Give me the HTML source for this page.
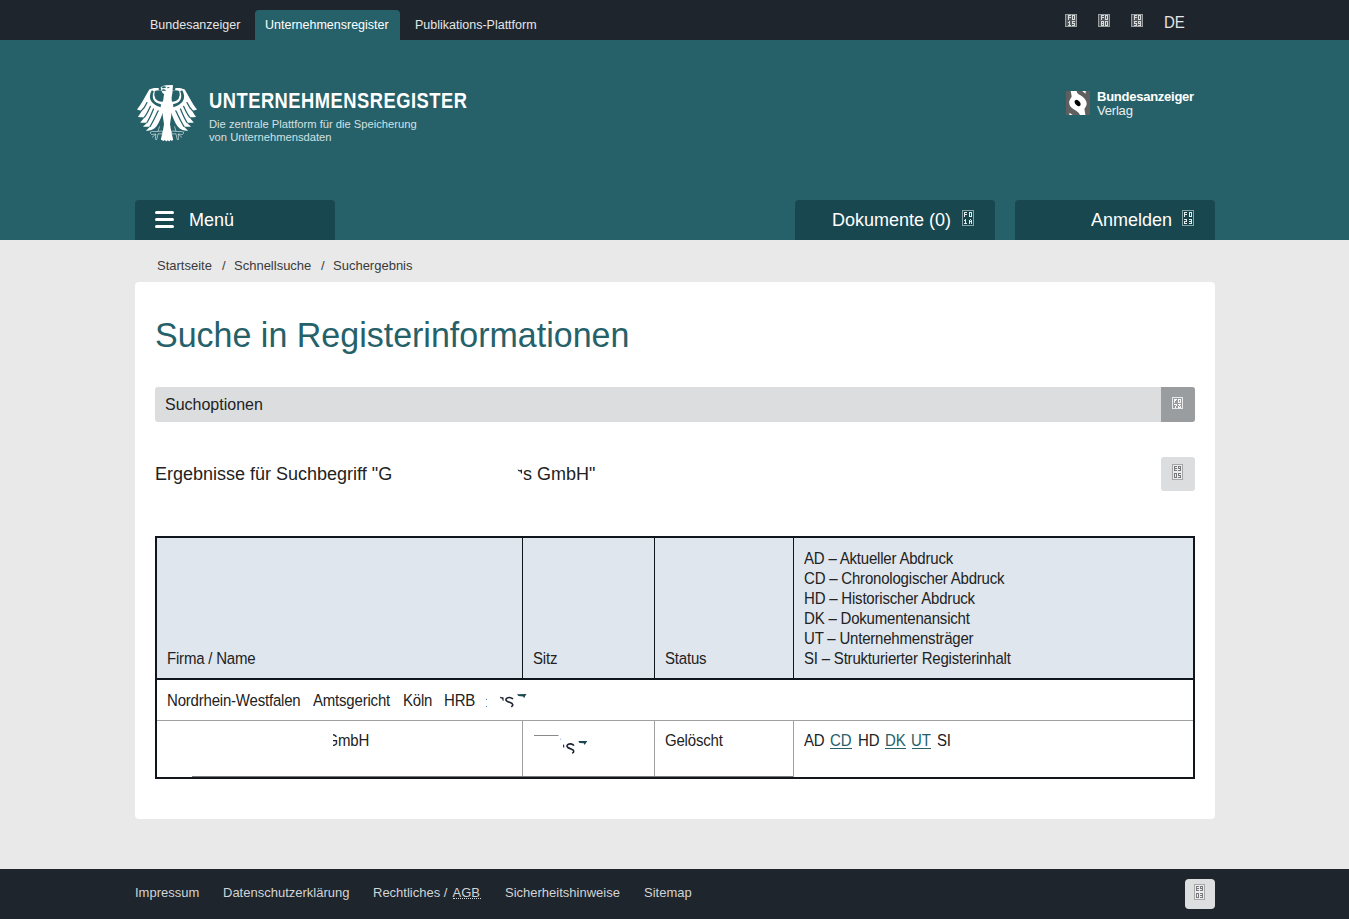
<!DOCTYPE html>
<html lang="de"><head><meta charset="utf-8">
<style>
*{box-sizing:border-box;margin:0;padding:0}
html,body{width:1349px;height:919px;overflow:hidden}
body{font-family:"Liberation Sans",sans-serif;background:#e9e9e9;color:#222;position:relative}
.a{position:absolute;white-space:nowrap;line-height:1}
.sy{transform:scaleY(1.05);transform-origin:0 16%}
#topbar{left:0;top:0;width:1349px;height:40px;background:#1e252d}
.tab{font-size:12.5px;color:#e6e6e6}
.act{left:255px;top:10px;width:145px;height:30px;background:#26616a;border-radius:4px 4px 0 0}
#header{left:0;top:40px;width:1349px;height:200px;background:#26616a}
.btn{position:absolute;top:200px;height:40px;background:#19474f;border-radius:4px 4px 0 0}
.bt{color:#fff;font-size:18px}
.tofu{position:absolute;border:1px solid #9a9a9a;background:#5b6066}
.tofu i{position:absolute;left:1px;right:1px;height:4px;background:repeating-linear-gradient(90deg,#ddd 0 1px,transparent 1px 2px)}
#card{left:135px;top:282px;width:1080px;height:537px;background:#fff;border-radius:4px}
#footer{left:0;top:869px;width:1349px;height:50px;background:#1e252d}
.ft{font-size:13px;color:#d2d4d6}

.tbl{font-size:15px;color:#222;letter-spacing:-0.2px;transform:scaleY(1.07);transform-origin:0 2.5px}
.tbl.lk{color:#26616a}
</style></head><body>
<div id="topbar" class="a"></div>
<div class="a act"></div>
<div class="a tab sy" style="left:150px;top:19px">Bundesanzeiger</div>
<div class="a tab sy" style="left:265px;top:19px;color:#fff">Unternehmensregister</div>
<div class="a tab sy" style="left:415px;top:19px">Publikations-Plattform</div>
<div class="a sy" style="left:1164px;top:14px;font-size:15px;color:#e6e6e6">DE</div>

<div id="header" class="a"></div>
<svg class="a" style="left:137px;top:85px" width="60" height="57" viewBox="0 0 60 57">
 <g>
  <path fill="#fff" d="M21.8 3.2 C19 2.5 14.5 3 12.3 4.6 C8 12 4 20 0 24.4 C1.8 25.2 3.5 25.4 5 25.4 C3.5 28 2.4 30.3 0.9 31.7 C3.2 32.4 5.8 32.5 7.8 32 C6.2 34 4.6 36 3.2 37.4 C5.5 37.9 8.3 37.9 10.4 37.4 C8.8 39 7.4 40.4 5.9 41.5 C8.3 41.9 11 41.8 13.5 41.2 C12 42.8 10.4 44.4 8.9 45.7 C12.5 46 16.5 45 19.3 41.5 C22 38 24.5 32 25.6 27.8 L30 28 L30 14 L27 6 L21.8 5 Z"/>
  <path fill="#26616a" d="M14.8 5.3 Q11.2 11.5 14.3 16.3 Q17.5 21 23.9 22.2 L23.9 19.2 Q18.8 18.3 16.7 15 Q14.8 11.5 16.8 6.3 Z"/>
  <path fill="#26616a" d="M17.8 6 Q22 4.6 27.5 6.2 L27.5 16.5 Q21.5 17.5 18.4 13.8 Q16.4 10 17.8 6 Z"/>
  <g stroke="#26616a" stroke-width="1.25" fill="none" stroke-linecap="round">
   <path d="M10 17.6 C8.5 21 6.5 24 4.6 25.5"/>
   <path d="M13.3 21.4 C11.5 25.5 9.5 29.5 7.4 32.1"/>
   <path d="M16.5 24 C14.5 29 12.5 33.5 10 37.5"/>
   <path d="M21.1 25.9 C18.5 31.5 16 37 13.1 41.3"/>
  </g>
  <g stroke="#fff" stroke-width="0.65" fill="none" opacity="0.85">
   <path d="M13.5 47 Q14 46.2 19 46.5 L25.5 46 Q26 48 25 49 L21 48.8 L19.8 54.5 L18.3 54.3 L18.8 49 L14.5 49.5 Q13 48.5 13.5 47 Z"/>
   <path d="M22.5 41.3 L21 46.5 M15 52.5 L18.8 49"/>
  </g>
 </g>
 <g transform="matrix(-1 0 0 1 60 0)">
  <path fill="#fff" d="M21.8 3.2 C19 2.5 14.5 3 12.3 4.6 C8 12 4 20 0 24.4 C1.8 25.2 3.5 25.4 5 25.4 C3.5 28 2.4 30.3 0.9 31.7 C3.2 32.4 5.8 32.5 7.8 32 C6.2 34 4.6 36 3.2 37.4 C5.5 37.9 8.3 37.9 10.4 37.4 C8.8 39 7.4 40.4 5.9 41.5 C8.3 41.9 11 41.8 13.5 41.2 C12 42.8 10.4 44.4 8.9 45.7 C12.5 46 16.5 45 19.3 41.5 C22 38 24.5 32 25.6 27.8 L30 28 L30 14 L27 6 L21.8 5 Z"/>
  <path fill="#26616a" d="M14.8 5.3 Q11.2 11.5 14.3 16.3 Q17.5 21 23.9 22.2 L23.9 19.2 Q18.8 18.3 16.7 15 Q14.8 11.5 16.8 6.3 Z"/>
  <path fill="#26616a" d="M17.8 6 Q22 4.6 27.5 6.2 L27.5 16.5 Q21.5 17.5 18.4 13.8 Q16.4 10 17.8 6 Z"/>
  <g stroke="#26616a" stroke-width="1.25" fill="none" stroke-linecap="round">
   <path d="M10 17.6 C8.5 21 6.5 24 4.6 25.5"/>
   <path d="M13.3 21.4 C11.5 25.5 9.5 29.5 7.4 32.1"/>
   <path d="M16.5 24 C14.5 29 12.5 33.5 10 37.5"/>
   <path d="M21.1 25.9 C18.5 31.5 16 37 13.1 41.3"/>
  </g>
  <g stroke="#fff" stroke-width="0.65" fill="none" opacity="0.85">
   <path d="M13.5 47 Q14 46.2 19 46.5 L25.5 46 Q26 48 25 49 L21 48.8 L19.8 54.5 L18.3 54.3 L18.8 49 L14.5 49.5 Q13 48.5 13.5 47 Z"/>
   <path d="M22.5 41.3 L21 46.5 M15 52.5 L18.8 49"/>
  </g>
 </g>
 <path fill="#fff" d="M27.7 9 L32.3 9 L34.5 10.6 L34.8 16 L36.3 21 L34.6 28 L33 39.3 Q34 47 36.2 54.6 L35 56 L33.5 55 L32.2 56.5 L30.8 55.2 L29.2 56.5 L27.8 55 L26.4 56 L23.8 54.6 Q26 47 27 39.3 L25.4 28 L23.7 21 L26.2 15.5 L26.8 10.4 Z"/>
 <path fill="#fff" d="M23.6 2.6 Q25 0.4 28.7 0.2 L35.9 0 L35.5 7.5 L34.6 12 L27.9 10.2 L25.2 7.3 Q24 5 23.6 2.6 Z"/>
 <path fill="#26616a" d="M24.5 1.9 Q27 0.7 29.5 2.1 Q28 3.4 26 3.3 Q24.9 2.9 24.5 1.9 Z"/>
 <path fill="#26616a" d="M25 4.5 Q27 3.9 28.8 4.9 L28.4 6 Q26.6 5.4 25.3 6.1 Z"/>
 <path fill="#26616a" d="M30.2 1.9 L33.1 2.3 L30.7 3.6 Z"/>
</svg>
<div class="a" style="left:209px;top:90px;font-size:22px;font-weight:700;color:#fff;letter-spacing:0.6px;transform:scaleX(0.833);transform-origin:0 0">UNTERNEHMENSREGISTER</div>
<div class="a" style="left:209px;top:118px;font-size:11.2px;color:#d3e0e2;line-height:13px">Die zentrale Plattform für die Speicherung<br>von Unternehmensdaten</div>

<svg class="a" style="left:1066px;top:91px" width="24" height="24" viewBox="0 0 24 24">
 <rect width="24" height="24" fill="#5f5f5f"/>
 <path fill="#fff" d="M4.7 0 L10.6 0 C11 2 12 3 14 4 C17 5.5 20.7 9 20.7 12.6 C20.7 15 19 17 18.4 18.1 C18.6 20 19.2 22 19.4 24 L13.9 24 C13 21.5 11 20 8 18.5 C5 17 3.1 14.5 3.1 11.6 C3.1 9 5 7 5.7 5.4 C5.4 3.5 4.9 1.5 4.7 0 Z M16.2 0 L19.8 0 L19.5 2.8 Z M3.4 21.7 L6.7 24 L3.4 24 Z"/>
 <ellipse cx="11.6" cy="12" rx="3.6" ry="2.3" transform="rotate(50 11.6 12)" fill="#000"/>
</svg>
<div class="a" style="left:1097px;top:90px;font-size:13px;font-weight:700;color:#fff;letter-spacing:-0.25px">Bundesanzeiger</div>
<div class="a" style="left:1097px;top:104px;font-size:13px;color:#e8eeef;letter-spacing:-0.2px">Verlag</div>

<div class="btn" style="left:135px;width:200px">
  <div class="a" style="left:20px;top:11px;width:19px;height:3px;background:#fff;border-radius:2px"></div>
  <div class="a" style="left:20px;top:18px;width:19px;height:3px;background:#fff;border-radius:2px"></div>
  <div class="a" style="left:20px;top:25px;width:19px;height:3px;background:#fff;border-radius:2px"></div>
  <span class="a bt sy" style="left:54px;top:10px">Menü</span>
</div>
<div class="btn" style="left:795px;width:200px"><span class="a bt sy" style="left:37px;top:10px">Dokumente (0)</span></div>
<div class="btn" style="left:1015px;width:200px"><span class="a bt sy" style="left:76px;top:10px">Anmelden</span></div>

<div class="a sy" style="left:157px;top:259px;font-size:13px;color:#3a3a3a">Startseite</div>
<div class="a sy" style="left:222px;top:259px;font-size:13px;color:#3a3a3a">/</div>
<div class="a sy" style="left:234px;top:259px;font-size:13px;color:#3a3a3a">Schnellsuche</div>
<div class="a sy" style="left:321px;top:259px;font-size:13px;color:#3a3a3a">/</div>
<div class="a sy" style="left:333px;top:259px;font-size:13px;color:#3a3a3a">Suchergebnis</div>

<div id="card" class="a"></div>
<div class="a" style="left:155px;top:318px;font-size:34px;color:#26616a;transform:scaleY(1.05);transform-origin:0 85%">Suche in Registerinformationen</div>

<div class="a" style="left:155px;top:387px;width:1040px;height:35px;background:#dcdddf;border-radius:3px"></div>
<div class="a" style="left:1161px;top:387px;width:34px;height:35px;background:#9a9da0;border-radius:0 3px 3px 0"></div>
<div class="a sy" style="left:165px;top:396px;font-size:16px;color:#222">Suchoptionen</div>

<div class="a sy" style="left:155px;top:464px;font-size:18px;color:#222">Ergebnisse für Suchbegriff "G</div>
<div class="a sy" style="left:523px;top:464px;font-size:18px;color:#222">s GmbH"</div>
<svg class="a" style="left:517px;top:469px" width="6" height="6" viewBox="0 0 6 6"><path d="M0.5 0.5 L3 1.2 L5 0.6 L5 4.5 L4 4.5 L3.6 2.4 L1.5 2.2 Z" fill="#1a2433"/></svg>
<div class="a" style="left:1161px;top:457px;width:34px;height:34px;background:#dcdddf;border-radius:3px"></div>

<!-- table -->
<div class="a" style="left:155px;top:536px;width:1040px;height:243px;border:2px solid #10161c;background:#fff"></div>
<div class="a" style="left:157px;top:538px;width:1036px;height:140px;background:#dfe6ee"></div>
<div class="a" style="left:157px;top:678px;width:1036px;height:2px;background:#10161c"></div>
<div class="a" style="left:522px;top:538px;width:1px;height:140px;background:#10161c"></div>
<div class="a" style="left:654px;top:538px;width:1px;height:140px;background:#10161c"></div>
<div class="a" style="left:793px;top:538px;width:1px;height:140px;background:#10161c"></div>
<div class="a" style="left:157px;top:720px;width:1036px;height:1px;background:#a0a0a0"></div>
<div class="a" style="left:522px;top:721px;width:1px;height:56px;background:#a0a0a0"></div>
<div class="a" style="left:654px;top:721px;width:1px;height:56px;background:#a0a0a0"></div>
<div class="a" style="left:793px;top:721px;width:1px;height:56px;background:#a0a0a0"></div>
<div class="a" style="left:192px;top:776px;width:601px;height:1px;background:#7a7a7a"></div>

<div class="a tbl" style="left:167px;top:650px">Firma / Name</div>
<div class="a tbl" style="left:533px;top:650px">Sitz</div>
<div class="a tbl" style="left:665px;top:650px">Status</div>
<div class="a tbl" style="left:804px;top:550px">AD – Aktueller Abdruck</div>
<div class="a tbl" style="left:804px;top:570px">CD – Chronologischer Abdruck</div>
<div class="a tbl" style="left:804px;top:590px">HD – Historischer Abdruck</div>
<div class="a tbl" style="left:804px;top:610px">DK – Dokumentenansicht</div>
<div class="a tbl" style="left:804px;top:630px">UT – Unternehmensträger</div>
<div class="a tbl" style="left:804px;top:650px">SI – Strukturierter Registerinhalt</div>

<div class="a tbl" style="left:167px;top:692px">Nordrhein-Westfalen</div>
<div class="a tbl" style="left:313px;top:692px">Amtsgericht</div>
<div class="a tbl" style="left:403px;top:692px">Köln</div>
<div class="a tbl" style="left:444px;top:692px">HRB</div>

<div class="a tbl" style="left:326.5px;top:732px">GmbH</div>
<div class="a" style="left:325px;top:730px;width:8px;height:7px;background:#fff"></div>
<div class="a" style="left:325px;top:737px;width:7.5px;height:3px;background:#fff"></div>
<div class="a" style="left:325px;top:740px;width:8px;height:8px;background:#fff"></div>
<div class="a tbl" style="left:665px;top:732px">Gelöscht</div>
<div class="a tbl" style="left:804px;top:732px">AD</div>
<div class="a tbl lk" style="left:830px;top:732px">CD</div>
<div class="a tbl" style="left:858px;top:732px">HD</div>
<div class="a tbl lk" style="left:885px;top:732px">DK</div>
<div class="a tbl lk" style="left:911px;top:732px">UT</div>
<div class="a tbl" style="left:937px;top:732px">SI</div>
<div class="a" style="left:830px;top:748px;width:22px;height:1px;background:#26616a"></div>
<div class="a" style="left:885px;top:748px;width:21px;height:1px;background:#26616a"></div>
<div class="a" style="left:912px;top:748px;width:19px;height:1px;background:#26616a"></div>

<div id="footer" class="a"></div>
<div class="a ft sy" style="left:135px;top:886px">Impressum</div>
<div class="a ft sy" style="left:223px;top:886px">Datenschutzerklärung</div>
<div class="a ft sy" style="left:373px;top:886px">Rechtliches /</div>
<div class="a ft sy" style="left:452.5px;top:886px">AGB</div>
<div class="a" style="left:453px;top:898px;width:28px;height:0;border-top:1px dotted #d2d4d6"></div>
<div class="a ft sy" style="left:505px;top:886px">Sicherheitshinweise</div>
<div class="a ft sy" style="left:644px;top:886px">Sitemap</div>
<div class="a" style="left:1185px;top:879px;width:30px;height:30px;background:#dddee0;border-radius:4px"></div>
<!--FRAG-->
<svg class="a" style="left:484px;top:692px" width="46" height="18" viewBox="0 0 46 18">
 <circle cx="2.5" cy="7.3" r="0.6" fill="#3b78c0"/>
 <circle cx="2.5" cy="14.5" r="0.6" fill="#3b78c0"/>
 <path d="M15.8 4.7 L19.6 5.5 L19.6 8.7 L18.6 8.7 L18.2 6.8 L16.5 6.3 Z" fill="#1b2230"/>
 <path d="M28.9 7.2 C28 5.2 23.5 4.8 22.2 6.8 C21 8.8 24 9.8 26.2 10.6 C29 11.6 29.8 13.6 27.2 14.8" stroke="#1b2230" stroke-width="1.6" fill="none"/>
 <path d="M33 2.2 L42.5 2 L41.5 3.6 L40 6.2 L39.2 4.4 L34.4 4 Z" fill="#1a4650"/>
</svg>
<svg class="a" style="left:532px;top:733px" width="58" height="22" viewBox="0 0 58 22">
 <path d="M2 2.5 L26.5 2.5" stroke="#8a8a8a" stroke-width="1"/>
 <circle cx="28.6" cy="6" r="0.5" fill="#4a8ad0"/>
 <path d="M31.5 11.6 L31.8 14.5" stroke="#1b2230" stroke-width="1.1"/>
 <path d="M41.9 12.6 C41 10.6 36.5 10.2 35.2 12.2 C34 14.2 37 15.2 39.2 16 C42 17 42.8 19 40.2 20.2" stroke="#1b2230" stroke-width="1.6" fill="none"/>
 <path d="M46.3 8 L55.3 8 L54.3 9.6 L52.6 12 L51.8 10.2 L47.5 10 Z" fill="#1a4650"/>
</svg>
<!--/FRAG-->
<!--TOFU-->
<svg class="a" style="left:1065px;top:14px" width="12" height="13" viewBox="0 0 12 13"><rect x="0.5" y="0.5" width="11" height="12" fill="#54595e" stroke="#9a9da0"/><path fill="#f2f2f2" opacity="0.85" d="M3 1h1v1h-1zM4 1h1v1h-1zM5 1h1v1h-1zM3 2h1v1h-1zM3 3h1v1h-1zM4 3h1v1h-1zM5 3h1v1h-1zM3 4h1v1h-1zM3 5h1v1h-1zM7 1h1v1h-1zM8 1h1v1h-1zM9 1h1v1h-1zM7 2h1v1h-1zM9 2h1v1h-1zM7 3h1v1h-1zM9 3h1v1h-1zM7 4h1v1h-1zM9 4h1v1h-1zM7 5h1v1h-1zM8 5h1v1h-1zM9 5h1v1h-1zM4 7h1v1h-1zM3 8h1v1h-1zM4 8h1v1h-1zM4 9h1v1h-1zM4 10h1v1h-1zM3 11h1v1h-1zM4 11h1v1h-1zM5 11h1v1h-1zM7 7h1v1h-1zM8 7h1v1h-1zM9 7h1v1h-1zM7 8h1v1h-1zM7 9h1v1h-1zM8 9h1v1h-1zM9 9h1v1h-1zM9 10h1v1h-1zM7 11h1v1h-1zM8 11h1v1h-1zM9 11h1v1h-1z"/></svg>
<svg class="a" style="left:1098px;top:14px" width="12" height="13" viewBox="0 0 12 13"><rect x="0.5" y="0.5" width="11" height="12" fill="#54595e" stroke="#9a9da0"/><path fill="#f2f2f2" opacity="0.85" d="M3 1h1v1h-1zM4 1h1v1h-1zM5 1h1v1h-1zM3 2h1v1h-1zM3 3h1v1h-1zM4 3h1v1h-1zM5 3h1v1h-1zM3 4h1v1h-1zM3 5h1v1h-1zM7 1h1v1h-1zM8 1h1v1h-1zM9 1h1v1h-1zM7 2h1v1h-1zM9 2h1v1h-1zM7 3h1v1h-1zM9 3h1v1h-1zM7 4h1v1h-1zM9 4h1v1h-1zM7 5h1v1h-1zM8 5h1v1h-1zM9 5h1v1h-1zM3 7h1v1h-1zM4 7h1v1h-1zM5 7h1v1h-1zM3 8h1v1h-1zM5 8h1v1h-1zM3 9h1v1h-1zM4 9h1v1h-1zM5 9h1v1h-1zM3 10h1v1h-1zM5 10h1v1h-1zM3 11h1v1h-1zM4 11h1v1h-1zM5 11h1v1h-1zM7 7h1v1h-1zM8 7h1v1h-1zM9 7h1v1h-1zM7 8h1v1h-1zM9 8h1v1h-1zM7 9h1v1h-1zM9 9h1v1h-1zM7 10h1v1h-1zM9 10h1v1h-1zM7 11h1v1h-1zM8 11h1v1h-1zM9 11h1v1h-1z"/></svg>
<svg class="a" style="left:1131px;top:14px" width="12" height="13" viewBox="0 0 12 13"><rect x="0.5" y="0.5" width="11" height="12" fill="#54595e" stroke="#9a9da0"/><path fill="#f2f2f2" opacity="0.85" d="M3 1h1v1h-1zM4 1h1v1h-1zM5 1h1v1h-1zM3 2h1v1h-1zM3 3h1v1h-1zM4 3h1v1h-1zM5 3h1v1h-1zM3 4h1v1h-1zM3 5h1v1h-1zM7 1h1v1h-1zM8 1h1v1h-1zM9 1h1v1h-1zM7 2h1v1h-1zM9 2h1v1h-1zM7 3h1v1h-1zM9 3h1v1h-1zM7 4h1v1h-1zM9 4h1v1h-1zM7 5h1v1h-1zM8 5h1v1h-1zM9 5h1v1h-1zM3 7h1v1h-1zM4 7h1v1h-1zM5 7h1v1h-1zM3 8h1v1h-1zM3 9h1v1h-1zM4 9h1v1h-1zM5 9h1v1h-1zM5 10h1v1h-1zM3 11h1v1h-1zM4 11h1v1h-1zM5 11h1v1h-1zM7 7h1v1h-1zM8 7h1v1h-1zM9 7h1v1h-1zM7 8h1v1h-1zM9 8h1v1h-1zM7 9h1v1h-1zM8 9h1v1h-1zM9 9h1v1h-1zM9 10h1v1h-1zM7 11h1v1h-1zM8 11h1v1h-1zM9 11h1v1h-1z"/></svg>
<svg class="a" style="left:962px;top:210px" width="12" height="16" viewBox="0 0 12 16"><rect x="0.5" y="0.5" width="11" height="15" fill="#17444b" stroke="#86a6aa"/><path fill="#ffffff" opacity="0.9" d="M2 2h1v1h-1zM3 2h1v1h-1zM4 2h1v1h-1zM2 3h1v1h-1zM2 4h1v1h-1zM3 4h1v1h-1zM4 4h1v1h-1zM2 5h1v1h-1zM2 6h1v1h-1zM7 2h1v1h-1zM8 2h1v1h-1zM9 2h1v1h-1zM7 3h1v1h-1zM9 3h1v1h-1zM7 4h1v1h-1zM9 4h1v1h-1zM7 5h1v1h-1zM9 5h1v1h-1zM7 6h1v1h-1zM8 6h1v1h-1zM9 6h1v1h-1zM3 9h1v1h-1zM2 10h1v1h-1zM3 10h1v1h-1zM3 11h1v1h-1zM3 12h1v1h-1zM2 13h1v1h-1zM3 13h1v1h-1zM4 13h1v1h-1zM8 9h1v1h-1zM7 10h1v1h-1zM9 10h1v1h-1zM7 11h1v1h-1zM8 11h1v1h-1zM9 11h1v1h-1zM7 12h1v1h-1zM9 12h1v1h-1zM7 13h1v1h-1zM9 13h1v1h-1z"/></svg>
<svg class="a" style="left:1182px;top:210px" width="12" height="16" viewBox="0 0 12 16"><rect x="0.5" y="0.5" width="11" height="15" fill="#17444b" stroke="#86a6aa"/><path fill="#ffffff" opacity="0.9" d="M2 2h1v1h-1zM3 2h1v1h-1zM4 2h1v1h-1zM2 3h1v1h-1zM2 4h1v1h-1zM3 4h1v1h-1zM4 4h1v1h-1zM2 5h1v1h-1zM2 6h1v1h-1zM7 2h1v1h-1zM8 2h1v1h-1zM9 2h1v1h-1zM7 3h1v1h-1zM9 3h1v1h-1zM7 4h1v1h-1zM9 4h1v1h-1zM7 5h1v1h-1zM9 5h1v1h-1zM7 6h1v1h-1zM8 6h1v1h-1zM9 6h1v1h-1zM2 9h1v1h-1zM3 9h1v1h-1zM4 9h1v1h-1zM4 10h1v1h-1zM2 11h1v1h-1zM3 11h1v1h-1zM4 11h1v1h-1zM2 12h1v1h-1zM2 13h1v1h-1zM3 13h1v1h-1zM4 13h1v1h-1zM7 9h1v1h-1zM8 9h1v1h-1zM9 9h1v1h-1zM9 10h1v1h-1zM7 11h1v1h-1zM8 11h1v1h-1zM9 11h1v1h-1zM9 12h1v1h-1zM7 13h1v1h-1zM8 13h1v1h-1zM9 13h1v1h-1z"/></svg>
<svg class="a" style="left:1172px;top:397px" width="11" height="12" viewBox="0 0 11 12"><rect x="0.5" y="0.5" width="10" height="11" fill="#9a9da0" stroke="#e8e9ea"/><path fill="#ffffff" opacity="0.95" d="M2 2h1v1h-1zM3 2h1v1h-1zM4 2h1v1h-1zM2 3h1v1h-1zM3 3h1v1h-1zM2 4h1v1h-1zM2 5h1v1h-1zM6 2h1v1h-1zM7 2h1v1h-1zM8 2h1v1h-1zM6 3h1v1h-1zM8 3h1v1h-1zM6 4h1v1h-1zM8 4h1v1h-1zM6 5h1v1h-1zM7 5h1v1h-1zM8 5h1v1h-1zM2 7h1v1h-1zM3 7h1v1h-1zM4 7h1v1h-1zM4 8h1v1h-1zM3 9h1v1h-1zM3 10h1v1h-1zM6 7h1v1h-1zM7 7h1v1h-1zM8 7h1v1h-1zM7 8h1v1h-1zM6 9h1v1h-1zM8 9h1v1h-1zM6 10h1v1h-1zM7 10h1v1h-1zM8 10h1v1h-1z"/></svg>
<svg class="a" style="left:1172px;top:464px" width="11" height="16" viewBox="0 0 11 16"><rect x="0.5" y="0.5" width="10" height="15" fill="#ececed" stroke="#a4a6a8"/><path fill="#6a6c6f" opacity="0.9" d="M2 2h1v1h-1zM3 2h1v1h-1zM4 2h1v1h-1zM2 3h1v1h-1zM2 4h1v1h-1zM3 4h1v1h-1zM4 4h1v1h-1zM2 5h1v1h-1zM2 6h1v1h-1zM3 6h1v1h-1zM4 6h1v1h-1zM6 2h1v1h-1zM7 2h1v1h-1zM8 2h1v1h-1zM6 3h1v1h-1zM8 3h1v1h-1zM6 4h1v1h-1zM7 4h1v1h-1zM8 4h1v1h-1zM8 5h1v1h-1zM6 6h1v1h-1zM7 6h1v1h-1zM8 6h1v1h-1zM2 9h1v1h-1zM3 9h1v1h-1zM4 9h1v1h-1zM2 10h1v1h-1zM4 10h1v1h-1zM2 11h1v1h-1zM4 11h1v1h-1zM2 12h1v1h-1zM4 12h1v1h-1zM2 13h1v1h-1zM3 13h1v1h-1zM4 13h1v1h-1zM6 9h1v1h-1zM7 9h1v1h-1zM8 9h1v1h-1zM6 10h1v1h-1zM6 11h1v1h-1zM7 11h1v1h-1zM8 11h1v1h-1zM8 12h1v1h-1zM6 13h1v1h-1zM7 13h1v1h-1zM8 13h1v1h-1z"/></svg>
<svg class="a" style="left:1194px;top:884px" width="11" height="16" viewBox="0 0 11 16"><rect x="0.5" y="0.5" width="10" height="15" fill="#ececed" stroke="#a4a6a8"/><path fill="#6a6c6f" opacity="0.9" d="M2 2h1v1h-1zM3 2h1v1h-1zM4 2h1v1h-1zM2 3h1v1h-1zM2 4h1v1h-1zM3 4h1v1h-1zM4 4h1v1h-1zM2 5h1v1h-1zM2 6h1v1h-1zM3 6h1v1h-1zM4 6h1v1h-1zM6 2h1v1h-1zM7 2h1v1h-1zM8 2h1v1h-1zM6 3h1v1h-1zM8 3h1v1h-1zM6 4h1v1h-1zM7 4h1v1h-1zM8 4h1v1h-1zM8 5h1v1h-1zM6 6h1v1h-1zM7 6h1v1h-1zM8 6h1v1h-1zM2 9h1v1h-1zM3 9h1v1h-1zM4 9h1v1h-1zM2 10h1v1h-1zM4 10h1v1h-1zM2 11h1v1h-1zM4 11h1v1h-1zM2 12h1v1h-1zM4 12h1v1h-1zM2 13h1v1h-1zM3 13h1v1h-1zM4 13h1v1h-1zM6 9h1v1h-1zM7 9h1v1h-1zM8 9h1v1h-1zM8 10h1v1h-1zM6 11h1v1h-1zM7 11h1v1h-1zM8 11h1v1h-1zM8 12h1v1h-1zM6 13h1v1h-1zM7 13h1v1h-1zM8 13h1v1h-1z"/></svg>
<!--/TOFU-->
</body></html>
